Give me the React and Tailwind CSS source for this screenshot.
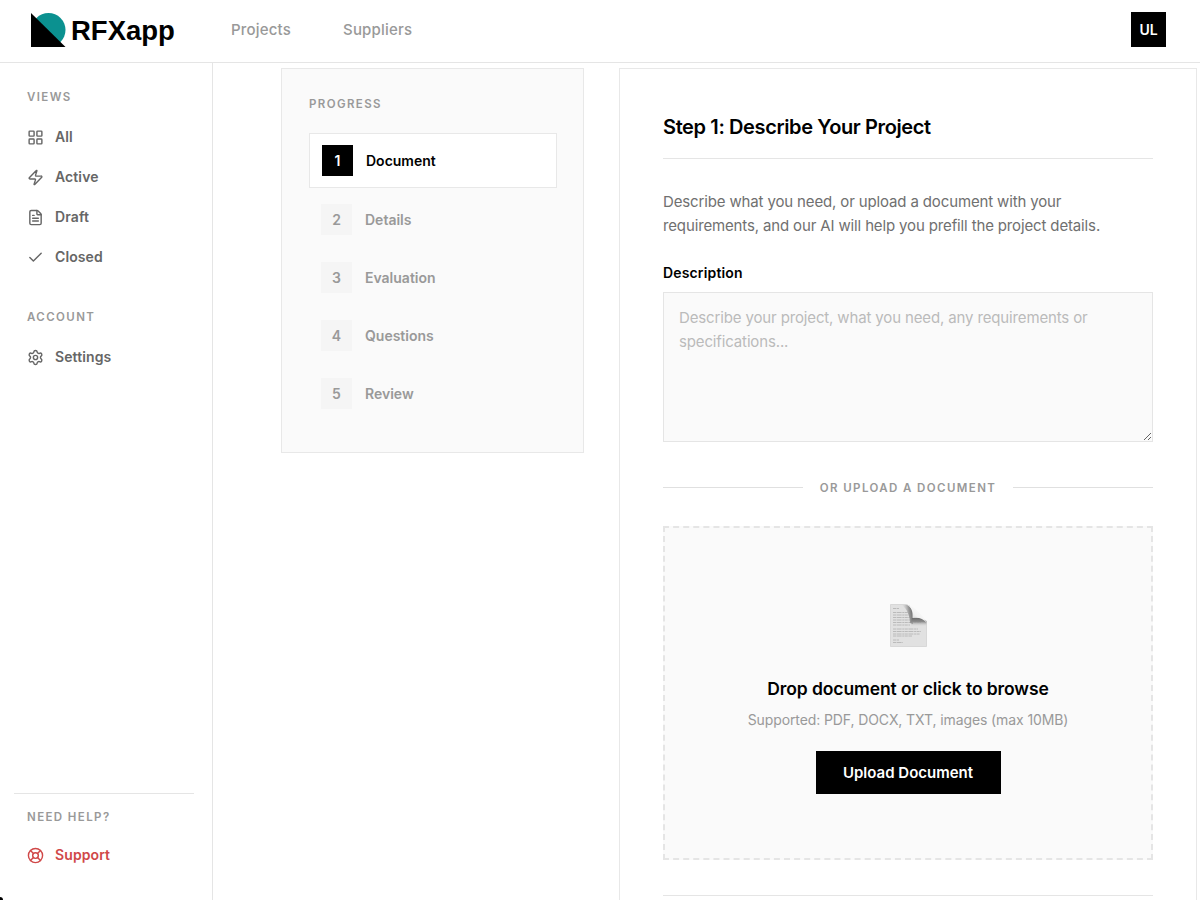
import { Check, FileText, LayoutGrid, LifeBuoy, Settings, Zap } from 'lucide-react';

const VIEWS = [
  { label: 'All', icon: LayoutGrid },
  { label: 'Active', icon: Zap },
  { label: 'Draft', icon: FileText },
  { label: 'Closed', icon: Check },
];

const STEPS = ['Document', 'Details', 'Evaluation', 'Questions', 'Review'];

function Logo() {
  return (
    <div className="flex items-center">
      <svg className="h-[34px] w-[35px]" viewBox="0 0 35 34">
        <circle cx="17.5" cy="17" r="17" fill="#0b9190" />
        <path d="M0 0V34H34.5Z" fill="#000" />
      </svg>
      <span className="ml-[5px] pt-[3px] font-['Liberation_Sans',sans-serif] text-[27.5px] leading-none font-bold">
        RFXapp
      </span>
    </div>
  );
}

function DocumentIcon() {
  return (
    <svg className="h-[43px] w-[37px]" viewBox="0 0 37 43">
      <defs>
        <linearGradient id="curl" x1="0.2" y1="0.8" x2="0.7" y2="0.3">
          <stop offset="0" stopColor="#d0d0d0" />
          <stop offset="0.5" stopColor="#f2f2f2" />
          <stop offset="1" stopColor="#fafafa" />
        </linearGradient>
        <linearGradient id="shadeDown" x1="0" y1="0" x2="0" y2="1">
          <stop offset="0" stopColor="#686868" />
          <stop offset="0.45" stopColor="#8a8a8a" />
          <stop offset="1" stopColor="#dfdfdf" stopOpacity="0" />
        </linearGradient>
        <linearGradient id="shadeLeft" x1="1" y1="0.4" x2="0" y2="0.6">
          <stop offset="0" stopColor="#6c6c6c" />
          <stop offset="0.35" stopColor="#9a9a9a" />
          <stop offset="1" stopColor="#dfdfdf" stopOpacity="0" />
        </linearGradient>
      </defs>
      <path d="M0.5 0.5H17L36.5 18V42.5H0.5Z" fill="#e1e1e1" stroke="#cfcfcf" strokeWidth="0.7" />
      <g stroke="#b0b0b0" strokeWidth="0.8" strokeDasharray="3 0.6 5 0.7 2 0.5">
        <path d="M3 4.5H9M3 8.5H18M3 11H20M3 13.5H20M3 16H20M3 18.5H31M3 21H20" />
        <path d="M3 25H28M3 27.5H31M3 30H30M3 32H22M3 36H9M3 38.500H13" />
      </g>
      <path d="M12 1H19L23 7V20L20 19C20 12 17 5 12 1Z" fill="url(#shadeLeft)" />
      <path d="M22 13.5H32L36.5 17V22.5H21Z" fill="url(#shadeDown)" />
      <path d="M16 0.5C22 3 23 8 22.500 14C28 13 33 14 36.500 18.500C36 15 24 1 16 0.500Z" fill="url(#curl)" />
    </svg>
  );
}

function SectionLabel({ children, className = '' }) {
  return (
    <p className={`text-[11.5px] leading-4 font-semibold tracking-[1.4px] text-[#999] uppercase ${className}`}>
      {children}
    </p>
  );
}

function NavItem({ icon: Icon, label, danger }) {
  return (
    <a
      href="#"
      className={`flex h-10 items-center gap-[11px] px-[27px] text-[14px] font-semibold tracking-[0.1px] ${
        danger ? 'text-[#d04848]' : 'text-[#666]'
      }`}
    >
      <Icon className="size-[17px]" strokeWidth={2} />
      <span className="pb-px">{label}</span>
    </a>
  );
}

function Header() {
  return (
    <header className="flex h-[63px] shrink-0 items-center border-b border-[#e5e5e5] pr-[34px] pb-[3px] pl-[31px]">
      <Logo />
      <nav className="ml-14 flex gap-[52px] pt-[2px] text-[15px] font-medium tracking-[0.2px] text-[#999]">
        <a href="#">Projects</a>
        <a href="#">Suppliers</a>
      </nav>
      <div className="ml-auto flex size-[35px] items-center justify-center bg-black text-[14px] font-semibold text-white">
        UL
      </div>
    </header>
  );
}

function Sidebar() {
  return (
    <aside className="flex w-[213px] shrink-0 flex-col border-r border-[#e5e5e5] pt-[26px] pb-[25px]">
      <SectionLabel className="px-[27px]">Views</SectionLabel>
      <nav className="mt-3">
        {VIEWS.map((item) => (
          <NavItem key={item.label} {...item} />
        ))}
      </nav>
      <SectionLabel className="mt-8 px-[27px]">Account</SectionLabel>
      <nav className="mt-3">
        <NavItem icon={Settings} label="Settings" />
      </nav>
      <div className="mt-auto">
        <div className="mr-[18px] ml-[14px] border-t border-[#e5e5e5]" />
        <SectionLabel className="mt-[15px] px-[27px]">Need help?</SectionLabel>
        <div className="mt-[10px]">
          <NavItem icon={LifeBuoy} label="Support" danger />
        </div>
      </div>
    </aside>
  );
}

function ProgressCard() {
  return (
    <section className="h-[385px] w-[303px] shrink-0 border border-[#e8e8e8] bg-[#fafafa] px-[27px] pt-[27px]">
      <SectionLabel>Progress</SectionLabel>
      <ol className="mt-[21px] text-[14px] font-semibold">
        {STEPS.map((step, i) =>
          i === 0 ? (
            <li
              key={step}
              className="mb-[2px] flex h-[55px] w-[248px] items-center gap-[13px] border border-[#e8e8e8] bg-white px-3 text-black"
            >
              <span className="flex size-[31px] items-center justify-center bg-black text-white">{i + 1}</span>
              {step}
            </li>
          ) : (
            <li key={step} className="flex h-[58px] items-center gap-[13px] px-3 text-[#999]">
              <span className="flex size-[31px] items-center justify-center bg-[#f5f5f5]">{i + 1}</span>
              {step}
            </li>
          ),
        )}
      </ol>
    </section>
  );
}

function UploadZone() {
  return (
    <div className="mt-[30px] flex h-[334px] flex-col items-center border-2 border-dashed border-[#e5e5e5] bg-[#fafafa] pt-[76px]">
      <DocumentIcon />
      <h3 className="mt-[30px] text-[17.5px] leading-6 font-semibold tracking-[-0.1px]">
        Drop document or click to browse
      </h3>
      <p className="mt-[9px] text-[14px] leading-5 tracking-[-0.1px] text-[#999]">
        Supported: PDF, DOCX, TXT, images (max 10MB)
      </p>
      <button className="mt-[21px] h-[43px] w-[185px] bg-black pt-px text-[15px] font-semibold text-white">
        Upload Document
      </button>
    </div>
  );
}

function StepForm() {
  return (
    <section className="ml-[35px] h-[900px] w-[578px] shrink-0 border border-[#e8e8e8] px-[43px] pt-[43px]">
      <h2 className="text-[20px] leading-[30px] font-semibold tracking-[-0.38px]">Step 1: Describe Your Project</h2>
      <div className="mt-4 border-t border-[#e5e5e5]" />
      <p className="mt-[31px] text-[15px] leading-6 tracking-[-0.14px] text-[#707070]">
        Describe what you need, or upload a document with your
        <br />
        requirements, and our AI will help you prefill the project details.
      </p>
      <label className="mt-[25px] block text-[14px] leading-5 font-semibold tracking-[0.15px]" htmlFor="description">
        Description
      </label>
      <textarea
        id="description"
        className="mt-[9px] block h-[150px] w-full resize-y border border-[#e5e5e5] bg-[#fafafa] px-[15px] py-[13px] text-[15px] leading-6 tracking-[-0.14px] placeholder:text-[#bbb]"
        placeholder="Describe your project, what you need, any requirements or specifications..."
      />
      <div className="mt-9 flex items-center gap-[17px]">
        <div className="flex-1 border-t border-[#e0e0e0]" />
        <SectionLabel className="pt-0.5 tracking-[1.3px]">Or upload a document</SectionLabel>
        <div className="flex-1 border-t border-[#e0e0e0]" />
      </div>
      <UploadZone />
      <div className="mt-[35px] border-t border-[#e5e5e5]" />
    </section>
  );
}

export default function App() {
  return (
    <div className="relative flex h-[900px] w-[1200px] flex-col overflow-hidden bg-white font-[Inter,sans-serif] text-black">
      <Header />
      <div className="flex min-h-0 flex-1">
        <Sidebar />
        <main className="flex min-w-0 flex-1 overflow-hidden pt-[5px] pl-[68px]">
          <ProgressCard />
          <StepForm />
        </main>
      </div>
      <div className="absolute bottom-0 left-0 size-[3px] rounded-tr-full bg-black" />
    </div>
  );
}
